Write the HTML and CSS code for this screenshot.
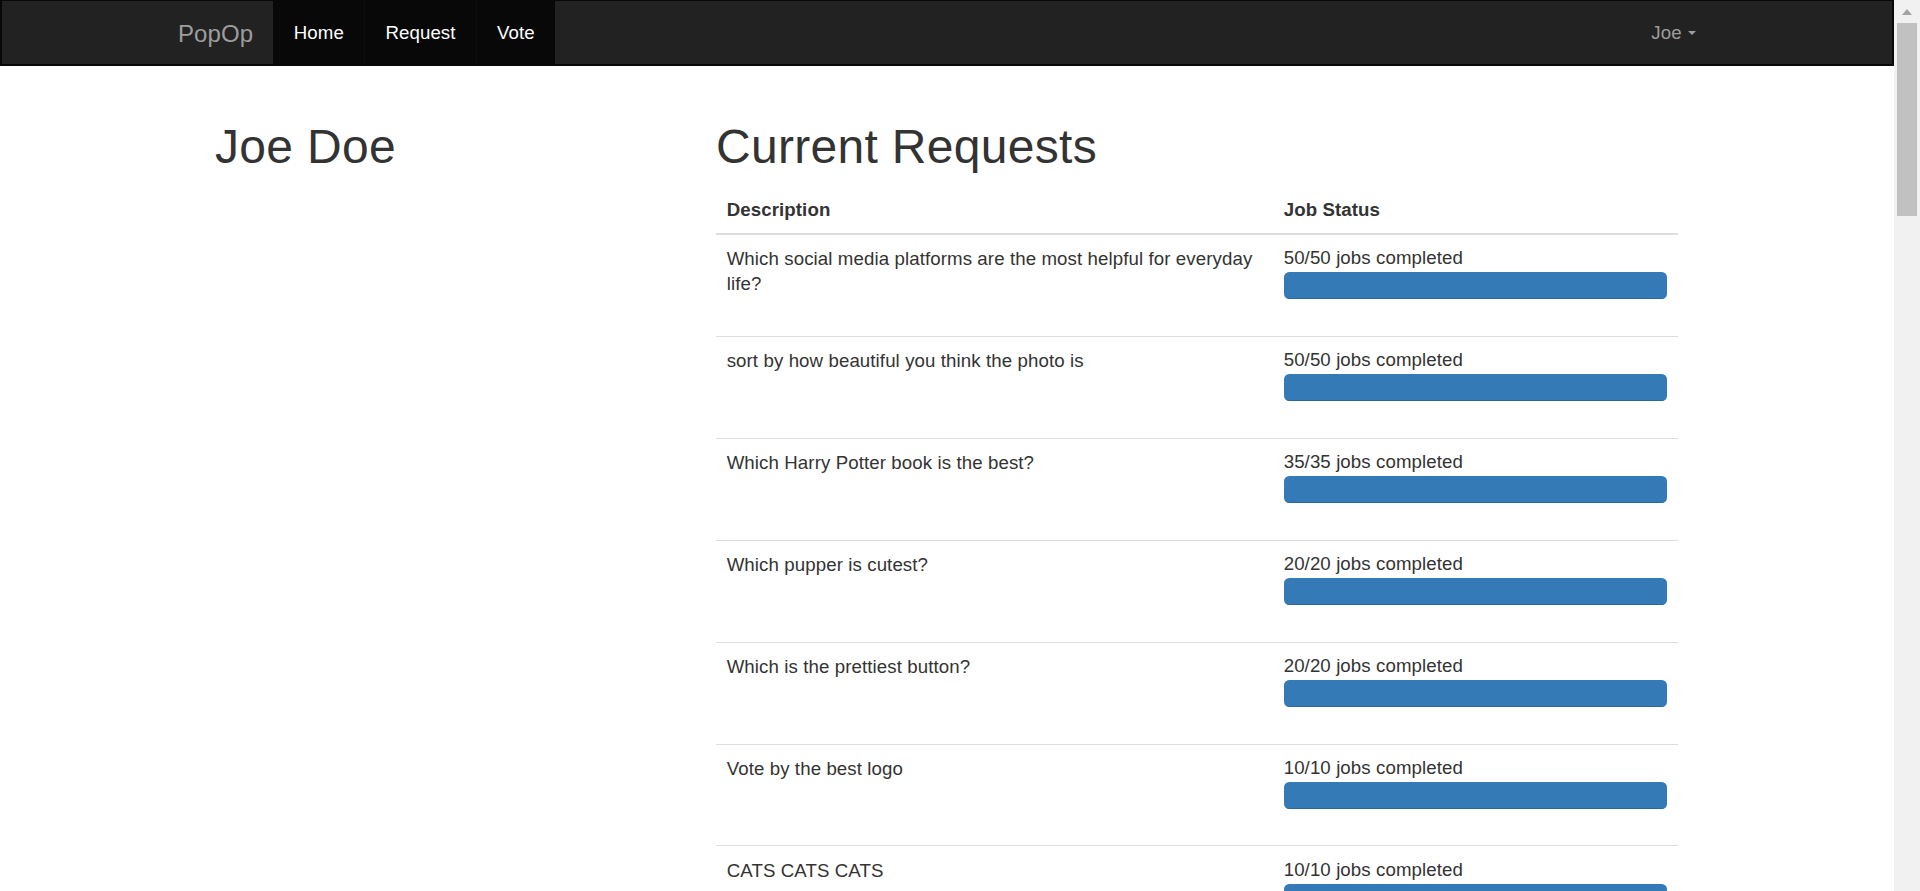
FILE: index.html
```html
<!DOCTYPE html>
<html lang="en">
<head>
<meta charset="utf-8">
<title>PopOp</title>
<link rel="stylesheet" href="styles.css">
</head>
<body>
<div class="window">
  <div class="page">
    <nav class="navbar">
      <div class="nav-left">
        <a class="brand" href="#">PopOp</a>
        <ul class="nav">
          <li><a href="#">Home</a></li>
          <li><a href="#">Request</a></li>
          <li><a href="#">Vote</a></li>
        </ul>
      </div>
      <div class="nav-right">
        <a class="user" href="#">Joe <span class="caret"></span></a>
      </div>
    </nav>
    <main class="content">
      <aside class="profile">
        <h1>Joe Doe</h1>
      </aside>
      <section class="requests">
        <h1>Current Requests</h1>
        <table class="table">
          <colgroup><col class="col-desc"><col class="col-status"></colgroup>
          <thead>
            <tr><th>Description</th><th>Job Status</th></tr>
          </thead>
          <tbody>
            <tr><td class="desc">Which social media platforms are the most helpful for everyday life?</td><td>50/50 jobs completed<div class="progress"><div class="progress-bar" style="width:100%"></div></div></td></tr>
            <tr><td class="desc">sort by how beautiful you think the photo is</td><td>50/50 jobs completed<div class="progress"><div class="progress-bar" style="width:100%"></div></div></td></tr>
            <tr><td class="desc">Which Harry Potter book is the best?</td><td>35/35 jobs completed<div class="progress"><div class="progress-bar" style="width:100%"></div></div></td></tr>
            <tr><td class="desc">Which pupper is cutest?</td><td>20/20 jobs completed<div class="progress"><div class="progress-bar" style="width:100%"></div></div></td></tr>
            <tr><td class="desc">Which is the prettiest button?</td><td>20/20 jobs completed<div class="progress"><div class="progress-bar" style="width:100%"></div></div></td></tr>
            <tr><td class="desc">Vote by the best logo</td><td>10/10 jobs completed<div class="progress"><div class="progress-bar" style="width:100%"></div></div></td></tr>
            <tr><td class="desc">CATS CATS CATS</td><td>10/10 jobs completed<div class="progress"><div class="progress-bar" style="width:100%"></div></div></td></tr>
          </tbody>
        </table>
      </section>
    </main>
  </div>
  <div class="scrollbar">
    <div class="scroll-arrow"></div>
    <div class="scroll-thumb"></div>
  </div>
</div>
</body>
</html>
```
FILE: styles.css
```css
* { box-sizing: border-box; }

html, body {
  margin: 0;
  padding: 0;
  height: 100%;
  overflow: hidden;
  background: #fff;
}

body {
  font-family: "Liberation Sans", Arial, Helvetica, sans-serif;
  font-size: 18.67px;
  line-height: 26.67px;
  letter-spacing: 0.1px;
  color: #333;
}

.window {
  display: flex;
  height: 891px;
  overflow: hidden;
}

.page {
  flex: 1;
  min-width: 0;
}

/* Navbar */
.navbar {
  display: flex;
  justify-content: space-between;
  height: 66px;
  background: #222;
  border: 2px solid #080808;
  border-top-width: 1px;
}

.nav-left {
  display: flex;
  margin-left: 156px;
}

.brand {
  display: block;
  padding: 20px 20px 0;
  font-size: 24px;
  line-height: 26.67px;
  color: #9d9d9d;
  text-decoration: none;
}

.nav {
  display: flex;
  list-style: none;
  margin: 0;
  padding: 0;
}

.nav li a {
  display: block;
  height: 100%;
  padding: 19px 20px 0 20.5px;
  background: #080808;
  color: #fff;
  text-decoration: none;
}

.nav li + li a {
  border-left: 1px solid #0f0f0f;
}

.nav-right {
  display: flex;
  margin-right: 176px;
}

.user {
  display: block;
  padding: 19px 20px 0;
  color: #9d9d9d;
  text-decoration: none;
}

.caret {
  display: inline-block;
  width: 0;
  height: 0;
  margin-left: 1px;
  vertical-align: 4px;
  border-top: 4px solid #9d9d9d;
  border-left: 4px solid transparent;
  border-right: 4px solid transparent;
}

/* Content */
.content {
  display: flex;
  padding: 54px 0 0 215px;
}

.content h1 {
  margin: 0;
  font-size: 48px;
  line-height: 53px;
  font-weight: 500;
  letter-spacing: 0.3px;
  color: #333;
}

.profile {
  width: 501px;
  flex: none;
}

.requests {
  width: 962px;
  flex: none;
}

.requests h1 {
  margin-bottom: 13px;
}

.table {
  width: 100%;
  border-collapse: collapse;
  table-layout: fixed;
}

.col-desc { width: 557px; }
.col-status { width: 405px; }

.table th {
  text-align: left;
  font-weight: bold;
  padding: 11px 10.67px 9px;
  border-bottom: 2px solid #ddd;
  vertical-align: bottom;
}

.table td {
  padding: 10.67px 10.67px 10.33px;
  border-top: 1px solid #ddd;
  vertical-align: top;
}

.table td.desc {
  padding-top: 11.5px;
  line-height: 25px;
}

.table tbody tr:first-child td {
  border-top: 0;
}

.progress {
  height: 26.67px;
  margin-bottom: 26.67px;
  overflow: hidden;
  background: #f5f5f5;
  border-radius: 5.33px;
  box-shadow: inset 0 1px 2px rgba(0, 0, 0, 0.1);
}

.progress-bar {
  height: 100%;
  background: #337ab7;
  box-shadow: inset 0 -1px 0 rgba(0, 0, 0, 0.15);
}

/* Fake browser scrollbar */
.scrollbar {
  width: 26px;
  flex: none;
  background: #f1f1f1;
  display: flex;
  flex-direction: column;
  align-items: center;
  padding-top: 9px;
}

.scroll-arrow {
  width: 0;
  height: 0;
  border-bottom: 6px solid #a3a3a3;
  border-left: 5px solid transparent;
  border-right: 5px solid transparent;
}

.scroll-thumb {
  width: 20px;
  height: 193px;
  margin-top: 8px;
  background: #c1c1c1;
}
```
